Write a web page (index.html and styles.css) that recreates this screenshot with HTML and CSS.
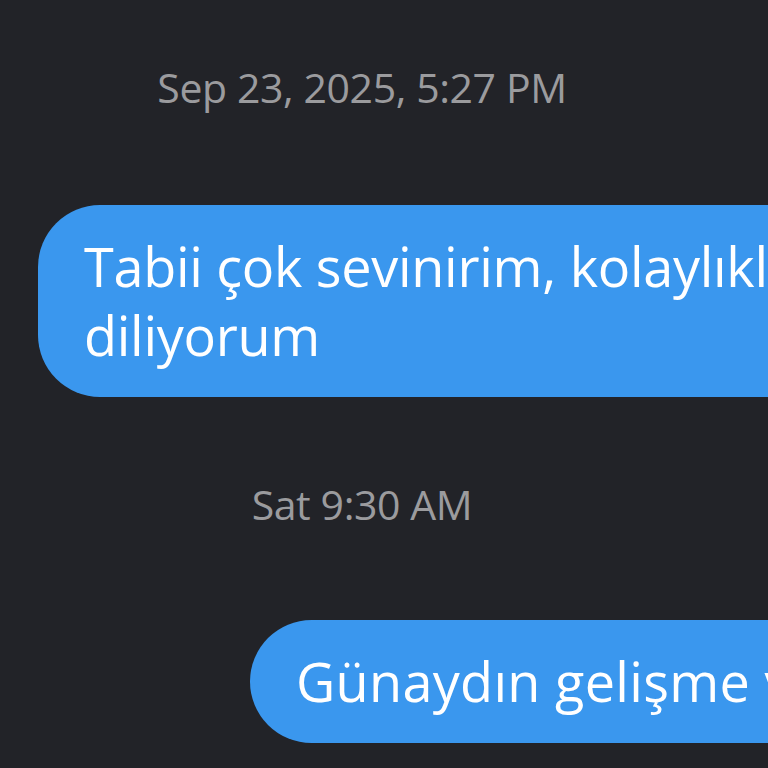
FILE: index.html
```html
<!DOCTYPE html>
<html lang="tr">
<head>
<meta charset="utf-8">
<title>Chat</title>
<link rel="stylesheet" href="styles.css">
</head>
<body>
<main class="thread">
  <div class="stamp stamp-first">Sep 23, 2025, 5:27 PM</div>
  <div class="row row-first">
    <div class="bubble bubble-wide">Tabii çok sevinirim, kolaylıklar diliyorum</div>
  </div>
  <div class="stamp stamp-second">Sat 9:30 AM</div>
  <div class="row row-second">
    <div class="bubble bubble-single">Günaydın gelişme var mı?</div>
  </div>
</main>
</body>
</html>
```
FILE: styles.css
```css
html, body {
  margin: 0;
  padding: 0;
  background: #222328;
  overflow: hidden;
}
body {
  width: 768px;
  height: 768px;
  font-family: "Open Sans", "Noto Sans", sans-serif;
}
.thread {
  display: flex;
  flex-direction: column;
  padding-top: 59px;
  width: 1400px;
}
.stamp {
  width: 724px;
  text-align: center;
  color: #9b9b9e;
  font-size: 41px;
  line-height: 56px;
  letter-spacing: -0.4px;
  white-space: nowrap;
}
.row {
  display: flex;
}
.row-first {
  margin-top: 90px;
  padding-left: 38px;
}
.stamp-second {
  margin-top: 79px;
}
.row-second {
  margin-top: 88px;
  padding-left: 250px;
}
.bubble {
  background: #3a97ee;
  color: #ffffff;
  font-size: 54px;
  line-height: 69px;
  padding: 27px 46px;
  border-radius: 62px;
}
.bubble-wide {
  width: 820px;
  letter-spacing: -0.3px;
}
.bubble-single {
  white-space: nowrap;
  letter-spacing: 0.3px;
}
```
